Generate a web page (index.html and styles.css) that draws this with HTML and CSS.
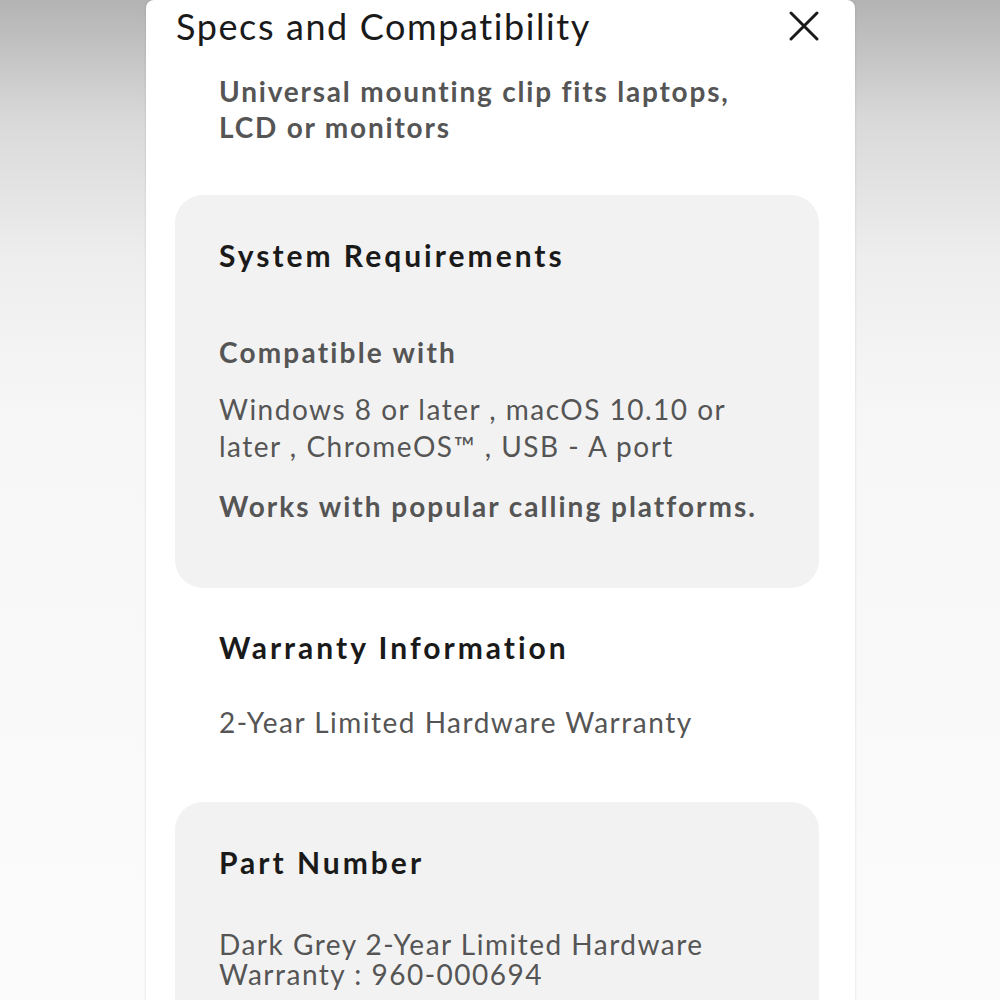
FILE: index.html
```html
<!DOCTYPE html>
<html lang="en">
<head>
  <meta charset="UTF-8">
  <title>Specs and Compatibility</title>
  <link rel="stylesheet" href="styles.css">
</head>
<body>
  <div class="sheet">
    <div class="sheet-head">
      <h1>Specs and Compatibility</h1>
      <button class="close" aria-label="Close">
        <svg width="32" height="32" viewBox="0 0 32 32">
          <path d="M3 3 L29 29 M29 3 L3 29" stroke="#1a1a1a" stroke-width="3" stroke-linecap="round" fill="none"/>
        </svg>
      </button>
    </div>

    <p class="lead">Universal mounting clip fits laptops, LCD or monitors</p>

    <section class="spec card">
      <h2>System Requirements</h2>
      <h3>Compatible with</h3>
      <p class="value">Windows 8 or later , macOS 10.10 or later , ChromeOS™ , USB - A port</p>
      <p class="note">Works with popular calling platforms.</p>
    </section>

    <section class="spec">
      <h2>Warranty Information</h2>
      <p class="value">2-Year Limited Hardware Warranty</p>
    </section>

    <section class="spec card">
      <h2>Part Number</h2>
      <p class="value tight">Dark Grey 2-Year Limited Hardware Warranty : 960-000694</p>
    </section>
  </div>
</body>
</html>
```

FILE: styles.css
```css
html, body { height: 100%; }
body {
  margin: 0;
  font-family: Lato, "Noto Sans", sans-serif;
  background: linear-gradient(to bottom, #b3b3b3 0, #d9d9d9 120px, #eeeeee 260px, #f7f7f7 420px, #fbfbfb 1000px);
  overflow: hidden;
}

.sheet {
  width: 709px;
  min-height: 1000px;
  margin: 0 0 0 146px;
  background: #fff;
  border-radius: 8px 8px 0 0;
  box-shadow: 0 0 3px rgba(0,0,0,0.12);
  padding: 0 36px 0 29px;
  box-sizing: border-box;
}

.sheet-head {
  display: flex;
  justify-content: space-between;
  align-items: center;
  height: 52px;
}
.sheet-head h1 {
  margin: 0 0 0 1px;
  font-size: 36px;
  letter-spacing: 1.6px;
  font-weight: 400;
  color: #1a1a1a;
}
.close {
  border: 0;
  background: none;
  padding: 0;
  margin-right: -1px;
  width: 32px;
  height: 32px;
}

.lead {
  margin: 21px 0 0 44px;
  font-size: 28px;
  letter-spacing: 1.8px;
  font-weight: 700;
  color: #555;
  line-height: 36px;
  max-width: 530px;
}

.spec {
  padding: 0 44px;
}
.card {
  background: #f2f2f2;
  border-radius: 28px;
}
.spec h2 {
  margin: 0;
  font-size: 30px;
  letter-spacing: 3px;
  font-weight: 700;
  color: #1a1a1a;
  line-height: 40px;
}
.spec h3 {
  margin: 0;
  font-size: 28px;
  letter-spacing: 2.2px;
  font-weight: 700;
  color: #555;
  line-height: 40px;
}
.value {
  margin: 0;
  font-size: 28px;
  letter-spacing: 1.5px;
  color: #555;
  line-height: 37px;
  max-width: 540px;
}
.value.tight { line-height: 30px; }
.note {
  margin: 0;
  font-size: 28px;
  letter-spacing: 2px;
  font-weight: 700;
  color: #555;
  line-height: 40px;
}

/* vertical rhythm of each block */
.sheet .spec:nth-of-type(1) { margin-top: 50px; padding-top: 40px; padding-bottom: 62px; }
.sheet .spec:nth-of-type(1) h3 { margin-top: 57px; }
.sheet .spec:nth-of-type(1) .value { margin-top: 19px; }
.sheet .spec:nth-of-type(1) .note { margin-top: 21px; }
.sheet .spec:nth-of-type(2) { margin-top: 39px; }
.sheet .spec:nth-of-type(2) .value { margin-top: 37px; }
.sheet .spec:nth-of-type(3) { margin-top: 61px; padding-top: 40px; padding-bottom: 40px; }
.sheet .spec:nth-of-type(3) .value { margin-top: 47px; }
```
